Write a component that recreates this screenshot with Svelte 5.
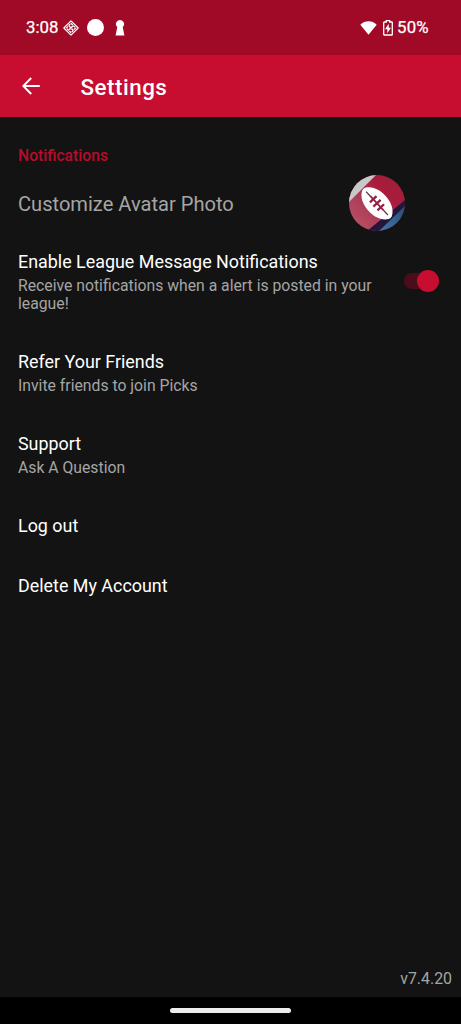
<script>
  const entries = [
    { title: 'Refer Your Friends', detail: 'Invite friends to join Picks' },
    { title: 'Support', detail: 'Ask A Question' },
    { title: 'Log out' },
    { title: 'Delete My Account' }
  ];
</script>

<div class="screen">
  <div class="status">
    <span class="clock">3:08</span>
    <svg class="diamond" width="16" height="16" viewBox="0 0 16 16" fill="none" stroke="#fff">
      <path d="M8 .8 15.2 8 8 15.2.8 8Z" stroke-width="1.1" stroke-linejoin="round" />
      <path d="m8 3.3 4.7 4.7L8 12.7 3.3 8Z" stroke-width="1.3" stroke-dasharray="2.4 .9" />
      <path d="m6 6 2 2M10 5.8 8.2 7.8M5.8 9.8l2-1.4M10.2 10.2 8.4 8.4" stroke-width="1.4" />
    </svg>
    <span class="dot"></span>
    <svg class="keyhole" width="10" height="16" viewBox="0 0 10 16" fill="#fff">
      <path d="M5 0a4 4 0 0 1 2.7 7L9.4 15.5H.6L2.3 7A4 4 0 0 1 5 0Z" />
    </svg>
    <svg class="wifi" width="17" height="14" viewBox="0 0 17 14" fill="#fff">
      <path d="M.3 3.7C5-.9 12-.9 16.7 3.7L8.5 13.7Z" />
    </svg>
    <svg class="battery" width="10" height="16" viewBox="0 0 10 16">
      <path d="M3.3 2V.7h3.4V2h2c.3 0 .6.3.6.6v11.8c0 .3-.3.6-.6.6H1.3a.6.6 0 0 1-.6-.6V2.6c0-.3.3-.6.6-.6Z" fill="none" stroke="#fff" stroke-width="1.3" />
      <path d="M5.7 3.8 2 9.2h2.3v4L8 7.8H5.7Z" fill="#fff" />
    </svg>
    <span class="percent">50%</span>
  </div>

  <header>
    <svg width="18" height="18" viewBox="0 0 18 18" fill="none" stroke="#fff" stroke-width="1.9">
      <path d="M17.8 9H1.6M9.2 1 1.3 9l7.9 8" />
    </svg>
    <h1>Settings</h1>
  </header>

  <main>
    <h2>Notifications</h2>
    <div class="avatar-row">
      <span class="customize">Customize Avatar Photo</span>
      <svg width="56" height="56" viewBox="0 0 56 56">
        <defs>
          <clipPath id="round"><circle cx="28" cy="28" r="28" /></clipPath>
          <linearGradient id="jersey" x1="0" y1="1" x2="1" y2="0">
            <stop offset="0" stop-color="#bd5669" />
            <stop offset=".45" stop-color="#aa3853" />
            <stop offset=".65" stop-color="#aa1c3c" />
            <stop offset="1" stop-color="#9b2038" />
          </linearGradient>
          <linearGradient id="blue" x1="0" y1="1" x2="1" y2="0">
            <stop offset="0" stop-color="#4776a5" />
            <stop offset="1" stop-color="#254d78" />
          </linearGradient>
        </defs>
        <g clip-path="url(#round)">
          <path d="M0 0h56v56H0Z" fill="url(#jersey)" />
          <path d="M0 0h27L0 27Z" fill="#c7c8c8" />
          <path d="M56 25 18 56h38Z" fill="#24163a" />
          <path d="M56 31 30 56h26Z" fill="url(#blue)" />
          <g transform="translate(28 28.3) rotate(47)">
            <path d="M-19.5-2C-13-14.5 13-14.5 19.5-2Q20.5 0 19.5 2C13 14.5-13 14.5-19.5 2Q-20.5 0-19.5-2Z" fill="#fff" />
            <path d="M-16 0h6M10 0h6" stroke="#5f3550" stroke-width="1.3" />
            <path d="M-10 0h20" stroke="#922443" stroke-width="1.8" />
            <path d="M-5.5-4.5v9M0-5v10M5.5-4.5v9" stroke="#922443" stroke-width="2.3" />
          </g>
        </g>
      </svg>
    </div>

    <section class="alerts">
      <div class="copy">
        <h3>Enable League Message Notifications</h3>
        <p>Receive notifications when a alert is posted in your league!</p>
      </div>
      <div class="switch" role="switch" aria-checked="true" tabindex="0"><span></span></div>
    </section>

    {#each entries as entry}
      <section>
        <h3>{entry.title}</h3>
        {#if entry.detail}<p>{entry.detail}</p>{/if}
      </section>
    {/each}
    <div class="version">v7.4.20</div>
  </main>
  <footer><span></span></footer>
</div>

<style>
  :global(body) { background: #131313; }
  .screen {
    width: 461px; height: 1024px; overflow: hidden;
    display: flex; flex-direction: column;
    font-family: Roboto, sans-serif; color: #fff; background: #131313;
  }
  .status { box-sizing: border-box; height: 55px; padding-left: 26px; display: flex; align-items: center; background: #a00a27; flex: none; }
  .clock, .percent { font-size: 16.8px; font-weight: 400; line-height: 20px; padding-bottom: 1px; -webkit-text-stroke: .25px #fff; }
  .clock { width: 37px; }
  .percent { letter-spacing: .2px; }
  .dot { width: 17px; height: 17px; margin-left: 8px; border-radius: 50%; background: #fff; }
  .keyhole { margin-left: 11px; }
  .wifi { margin-left: 235px; }
  .battery { margin: 0 4px 0 6px; }
  header { height: 62px; background: #c70d30; display: flex; align-items: center; flex: none; }
  header svg { margin-left: 22px; }
  h1, h2, h3, p { margin: 0; }
  h1 { margin-left: 40.5px; font-size: 22.4px; line-height: 26px; font-weight: 500; letter-spacing: .5px; padding-top: 1px; }
  main { flex: 1; min-height: 0; display: flex; flex-direction: column; padding: 0 9px 0 18px; }
  h2 { margin-top: 30px; color: #b80b2d; font-size: 15.7px; line-height: 18px; font-weight: 500; }
  .avatar-row { height: 63px; padding-right: 47px; display: flex; align-items: center; justify-content: space-between; margin-top: 6px; }
  .customize { font-size: 20.1px; line-height: 24px; color: #a5a5a5; padding-top: 2px; }
  section { padding: 18.5px 0 19.5px; }
  h3 { font-size: 17.9px; line-height: 21px; font-weight: 400; }
  p { font-size: 15.75px; line-height: 18.4px; margin-top: 4.6px; color: #a5a5a5; }
  .alerts { display: flex; justify-content: space-between; align-items: center; padding: 17px 13px 19px 0; }
  section:nth-last-of-type(-n + 2) { padding-bottom: 20.5px; }
  .copy { width: 370px; }
  .switch { width: 35px; height: 16px; margin-bottom: 2px; display: flex; align-items: center; justify-content: flex-end; background: #4b0d1b; border-radius: 8px; }
  .switch span { flex: none; width: 22px; height: 22px; border-radius: 50%; background: #c70d30; }
  .version { margin: auto 0 9px; text-align: right; font-size: 15.9px; line-height: 18px; color: #a5a5a5; }
  footer { height: 27px; flex: none; background: #000; display: flex; justify-content: center; align-items: center; }
  footer span { width: 121px; height: 4.5px; border-radius: 3px; background: #ececec; }
</style>
